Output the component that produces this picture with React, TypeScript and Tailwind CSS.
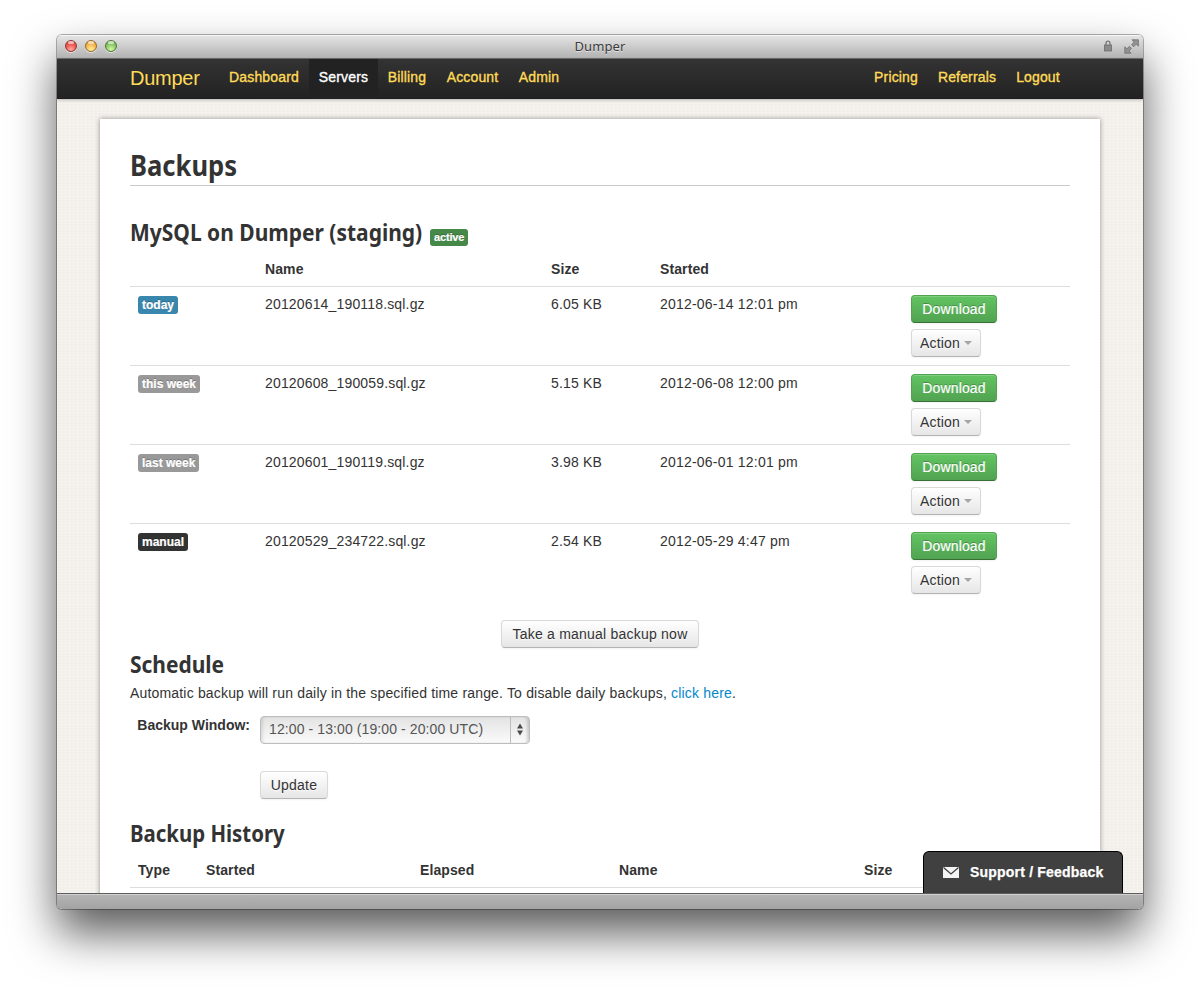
import React from 'react';

const links = [
  { label: 'Dashboard', width: 'w-[90px]' },
  { label: 'Servers', width: 'w-[69px]', active: true },
  { label: 'Billing', width: 'w-[58px]' },
  { label: 'Account', width: 'w-[73px]' },
  { label: 'Admin', width: 'w-[60px]' },
];

const rightLinks = [
  { label: 'Pricing', width: 'w-[64px]' },
  { label: 'Referrals', width: 'w-[78px]' },
  { label: 'Logout', width: 'w-[64px]' },
];

const backups = [
  { tag: 'today', color: 'bg-[#3a87ad]', name: '20120614_190118.sql.gz', size: '6.05 KB', started: '2012-06-14 12:01 pm' },
  { tag: 'this week', color: 'bg-[#999999]', name: '20120608_190059.sql.gz', size: '5.15 KB', started: '2012-06-08 12:00 pm' },
  { tag: 'last week', color: 'bg-[#999999]', name: '20120601_190119.sql.gz', size: '3.98 KB', started: '2012-06-01 12:01 pm' },
  { tag: 'manual', color: 'bg-[#333333]', name: '20120529_234722.sql.gz', size: '2.54 KB', started: '2012-05-29 4:47 pm' },
];

const lights = [
  'border-[#8d3a36] bg-[radial-gradient(circle_at_50%_85%,#ffb0a8_0%,#f4615b_45%,#c9322f_100%)]',
  'border-[#97692c] bg-[radial-gradient(circle_at_50%_85%,#fff09a_0%,#f6bc55_50%,#d08c2c_100%)]',
  'border-[#4a7a35] bg-[radial-gradient(circle_at_50%_85%,#d8f8a8_0%,#8fcb6c_50%,#5a9c41_100%)]',
];

const Label = ({ color, children }: { color: string; children: React.ReactNode }) => (
  <span
    className={`inline-block rounded-[3px] px-1 font-bold text-white whitespace-nowrap [-webkit-text-stroke:0.2px_white] [text-shadow:0_-1px_0_rgba(0,0,0,0.25)] ${color}`}
  >
    {children}
  </span>
);

const Button = ({ className = '', children }: { className?: string; children: React.ReactNode }) => (
  <button
    className={`flex h-7 items-center justify-center rounded-[4px] border border-[#d9d9d9] border-b-[#b3b3b3] bg-linear-to-b from-white to-[#e6e6e6] text-sm leading-[18px] tracking-[0.22px] whitespace-nowrap text-[#333] shadow-[inset_0_1px_0_rgba(255,255,255,0.2),0_1px_2px_rgba(0,0,0,0.05)] [text-shadow:0_1px_1px_rgba(255,255,255,0.75)] ${className}`}
  >
    {children}
  </button>
);

const Heading = ({ className = '', children }: { className?: string; children: React.ReactNode }) => (
  <h2 className={`origin-left font-['Noto_Sans'] text-2xl leading-9 font-bold whitespace-nowrap ${className}`}>
    {children}
  </h2>
);

const TitleBar = () => (
  <div className="relative flex h-[24px] items-center border-b border-[#6b6b6b] bg-linear-to-b from-[#e6e6e6] to-[#b2b2b2] shadow-[inset_0_1px_0_#f6f6f6]">
    <div className="flex gap-[8px] pb-[2px] pl-[8px]">
      {lights.map((light) => (
        <span key={light} className={`relative size-3 rounded-full border shadow-[0_1px_0_rgba(255,255,255,0.6)] ${light}`}>
          <span className="absolute top-0 left-[2px] h-[3px] w-[6px] rounded-full bg-white/60" />
        </span>
      ))}
    </div>
    <div className="absolute inset-x-0 top-[2px] text-center font-['Noto_Sans'] text-[13px] leading-[18px] tracking-[0.1px] text-[#3c3c3c] [text-shadow:0_1px_0_rgba(255,255,255,0.5)]">
      Dumper
    </div>
    <div className="ml-auto flex items-center pr-[4px] pb-[1px]">
      <svg width="8" height="12" viewBox="0 0 8 12" className="mr-[12px]">
        <path d="M2 6V3.2a2 2 0 0 1 4 0V6" fill="none" stroke="#707070" strokeWidth="1.2" />
        <rect x="0.5" y="5" width="7" height="6" fill="#8a8a8a" stroke="#6c6c6c" strokeWidth="0.8" />
      </svg>
      <svg width="15" height="15" viewBox="0 0 15 15" fill="#929292" stroke="#707070" strokeWidth="0.8">
        <path d="M8 0.8h6.4v6.4l-2.1-2.1-2.7 2.7-2-2 2.5-2.7z" />
        <path d="M7.2 14.2H0.8V7.8l2.1 2.1 2.4-2.6 2.1 2.1-2.5 2.5z" />
      </svg>
    </div>
  </div>
);

const NavBar = () => (
  <nav className="relative z-10 h-10 bg-linear-to-b from-[#333] to-[#222] px-[73px] text-sm text-[#ffdb58] shadow-[0_1px_3px_rgba(0,0,0,0.25),inset_0_-1px_0_rgba(0,0,0,0.1)]">
    <div className="flex h-full leading-[37px] tracking-[0.15px] [-webkit-text-stroke:0.35px_currentColor]">
      <span className="w-[89px] text-[20px] leading-[39px] tracking-[-0.25px] [-webkit-text-stroke:0px]">Dumper</span>
      {links.map((link) => (
        <span
          key={link.label}
          className={`text-center ${link.width} ${link.active ? 'bg-[#222] text-white' : ''}`}
        >
          {link.label}
        </span>
      ))}
      <div className="ml-auto flex">
        {rightLinks.map((link) => (
          <span key={link.label} className={`text-center ${link.width}`}>
            {link.label}
          </span>
        ))}
      </div>
    </div>
  </nav>
);

const BackupTable = () => (
  <table className="w-[940px] table-fixed border-collapse text-sm leading-[18px] tracking-[0.16px]">
    <colgroup>
      <col className="w-[127px]" />
      <col className="w-[286px]" />
      <col className="w-[109px]" />
      <col className="w-[251px]" />
      <col className="w-[167px]" />
    </colgroup>
    <thead>
      <tr className="text-left tracking-[0.1px]">
        <th className="h-[34px] p-2" />
        <th className="p-2">Name</th>
        <th className="p-2">Size</th>
        <th className="p-2">Started</th>
        <th className="p-2" />
      </tr>
    </thead>
    <tbody>
      {backups.map((backup) => (
        <tr key={backup.name} className="h-[79px] border-t border-[#ddd] align-top">
          <td className="p-2">
            <div className="mt-px text-xs leading-[18px] tracking-normal">
              <Label color={backup.color}>{backup.tag}</Label>
            </div>
          </td>
          <td className="p-2">{backup.name}</td>
          <td className="p-2">{backup.size}</td>
          <td className="p-2 tracking-[0.21px]">{backup.started}</td>
          <td className="p-2">
            <button className="mb-1.5 flex h-7 w-[86px] items-center justify-center rounded-[4px] border border-[#51a351] border-b-[#387038] bg-linear-to-b from-[#62c462] to-[#51a351] text-white shadow-[inset_0_1px_0_rgba(255,255,255,0.2),0_1px_2px_rgba(0,0,0,0.05)] [-webkit-text-stroke:0.2px_white] [text-shadow:0_-1px_0_rgba(0,0,0,0.25)]">
              Download
            </button>
            <Button className="w-[70px]">
              Action
              <span className="ml-1 border-x-4 border-t-4 border-x-transparent border-t-[#a5a5a5]" />
            </Button>
          </td>
        </tr>
      ))}
    </tbody>
  </table>
);

const Schedule = () => (
  <section>
    <Heading className="-mt-[2px] scale-x-[0.873]">Schedule</Heading>
    <p className="mt-[2px] text-sm leading-[18px] tracking-[0.175px] whitespace-nowrap">
      Automatic backup will run daily in the specified time range. To disable daily backups,{' '}
      <a className="text-[#0088cc]">click here</a>.
    </p>
    <div className="mt-[14px] flex">
      <label className="w-[120px] text-right text-sm leading-[18px] font-bold whitespace-nowrap">
        Backup Window:
      </label>
      <div className="ml-[10px] flex h-7 w-[270px] rounded-[4px] border border-[#bdbdbd] bg-linear-to-b from-[#e3e3e3] to-[#fbfbfb] text-sm leading-[25px] tracking-[0.1px] text-[#555] shadow-[inset_3px_0_3px_-1px_rgba(0,0,0,0.1),inset_-3px_0_3px_-1px_rgba(0,0,0,0.16)]">
        <span className="flex-1 pl-2">12:00 - 13:00 (19:00 - 20:00 UTC)</span>
        <span className="flex w-[19px] items-center border-l border-[#bdbdbd] pl-[5px]">
          <svg width="8" height="13" viewBox="0 0 8 13" fill="#4a4a4a">
            <path d="M4 0.5 7 5.5H1z" />
            <path d="M4 12.5 1 7.5h6z" />
          </svg>
        </span>
      </div>
    </div>
    <Button className="mt-[27px] ml-[130px] w-[68px]">Update</Button>
  </section>
);

const HistoryTable = () => (
  <table className="mt-[2px] w-[940px] table-fixed border-collapse text-sm leading-[18px] tracking-[0.1px]">
    <colgroup>
      <col className="w-[68px]" />
      <col className="w-[214px]" />
      <col className="w-[199px]" />
      <col className="w-[245px]" />
      <col className="w-[214px]" />
    </colgroup>
    <thead>
      <tr className="border-b border-[#ddd] text-left">
        {['Type', 'Started', 'Elapsed', 'Name', 'Size'].map((title) => (
          <th key={title} className="p-2">
            {title}
          </th>
        ))}
      </tr>
    </thead>
  </table>
);

export default function App() {
  return (
    <div className="h-[988px] w-[1200px] overflow-hidden bg-white px-[57px] pt-[35px] font-['Liberation_Sans',sans-serif] text-[#333]">
      <div className="h-[874px] w-[1086px] rounded-[5px] shadow-[0_0_0_1px_rgba(0,0,0,0.3),0_24px_46px_rgba(0,0,0,0.65)]">
        <div className="relative flex h-full flex-col overflow-hidden rounded-[5px]">
          <TitleBar />
          <NavBar />
          <main className="h-[794px] overflow-hidden bg-[#f2efea] bg-[repeating-linear-gradient(0deg,rgba(255,255,255,0.2)_0_1px,transparent_1px_3px),repeating-linear-gradient(90deg,rgba(255,255,255,0.2)_0_1px,transparent_1px_4px)] px-[43px] pt-5">
            <div className="h-[800px] bg-white px-[30px] pt-[28px] shadow-[0_0_5px_rgba(0,0,0,0.4)]">
              <div className="h-[39px] border-b border-[#c8c8c8]">
                <h1 className="origin-left scale-x-[0.882] font-['Noto_Sans'] text-[29px] leading-[36px] font-bold">Backups</h1>
              </div>
              <div className="mt-[28px] flex h-[38px]">
                <Heading className="w-[300px] scale-x-[0.874]">MySQL on Dumper (staging)</Heading>
                <div className="mt-[15px] text-[11px] leading-[17px] tracking-[-0.15px]">
                  <Label color="bg-[#468847]">active</Label>
                </div>
              </div>
              <BackupTable />
              <Button className="mx-auto mt-[17px] w-[198px]">Take a manual backup now</Button>
              <Schedule />
              <div className="mt-[16px]">
                <Heading className="scale-x-[0.85]">Backup History</Heading>
              </div>
              <HistoryTable />
            </div>
          </main>
          <div className="h-4 border-t border-[#5c5c5c] bg-linear-to-b from-[#b5b5b5] to-[#a3a3a3] shadow-[inset_0_1px_0_#d0d0d0]" />
          <div className="absolute right-[20px] bottom-4 flex h-[42px] w-[200px] items-center rounded-t-[6px] border border-b-0 border-black bg-[#404040] pb-[1px] pl-[19px] text-sm font-bold tracking-[0.2px] whitespace-nowrap text-white [-webkit-text-stroke:0.25px_white]">
            <svg width="16" height="11" viewBox="0 0 16 11" className="mr-[11px]">
              <rect width="16" height="11" fill="#f4f4f4" />
              <path d="M0.5 0.5 8 7l7.5-6.5" fill="none" stroke="#404040" strokeWidth="1.3" />
            </svg>
            Support / Feedback
          </div>
        </div>
      </div>
    </div>
  );
}
